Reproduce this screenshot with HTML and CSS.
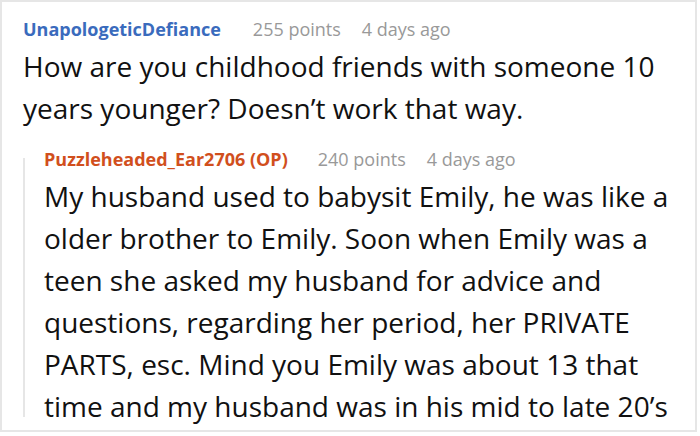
FILE: index.html
```html
<!DOCTYPE html>
<html>
<head>
<meta charset="utf-8">
<link rel="stylesheet" href="styles.css">
</head>
<body>
<div class="frame">
  <div class="comment">
    <div class="meta">
      <span class="user user-blue">UnapologeticDefiance</span>
      <span class="info">255 points</span>
      <span class="info">4 days ago</span>
    </div>
    <p class="text text-top">
      <span class="line">How are you childhood friends with someone 10</span>
      <span class="line">years younger? Doesn’t work that way.</span>
    </p>
  </div>
  <div class="reply">
    <div class="rule"></div>
    <div class="reply-body">
      <div class="meta">
        <span class="user user-orange">Puzzleheaded_Ear2706 (OP)</span>
        <span class="info">240 points</span>
        <span class="info">4 days ago</span>
      </div>
      <p class="text text-reply">
        <span class="line">My husband used to babysit Emily, he was like a</span>
        <span class="line">older brother to Emily. Soon when Emily was a</span>
        <span class="line">teen she asked my husband for advice and</span>
        <span class="line">questions, regarding her period, her PRIVATE</span>
        <span class="line">PARTS, esc. Mind you Emily was about 13 that</span>
        <span class="line">time and my husband was in his mid to late 20’s</span>
      </p>
    </div>
  </div>
</div>
</body>
</html>
```

FILE: styles.css
```css
html, body {
  margin: 0;
  padding: 0;
  background: #fff;
}
.frame {
  width: 697px;
  height: 432px;
  box-sizing: border-box;
  border: 2px solid #e6e6e6;
  padding: 15px 0 0 21px;
  overflow: hidden;
  font-family: "Open Sans", "Noto Sans", sans-serif;
  color: #111;
}
.meta {
  display: flex;
  gap: 21px;
  font-size: 18px;
  line-height: 24px;
}
.user {
  font-weight: 700;
  margin-right: 11px;
}
.reply .user {
  margin-right: 9px;
}
.user-blue { color: #3a6bbd; }
.user-orange { color: #d14f1d; }
.info { color: #999; }
.text {
  margin: 0;
  font-size: 28px;
  line-height: 42px;
}
.line {
  display: block;
  width: max-content;
  white-space: nowrap;
}
.text-top {
  margin-top: 4px;
}
.text-reply {
  margin-top: 4px;
}
.reply {
  display: flex;
  margin-top: 18px;
}
.rule {
  width: 2px;
  background: #e6e6e6;
  margin: 11px 0 10px 0;
  flex: none;
}
.reply-body {
  padding-left: 19px;
}
```
